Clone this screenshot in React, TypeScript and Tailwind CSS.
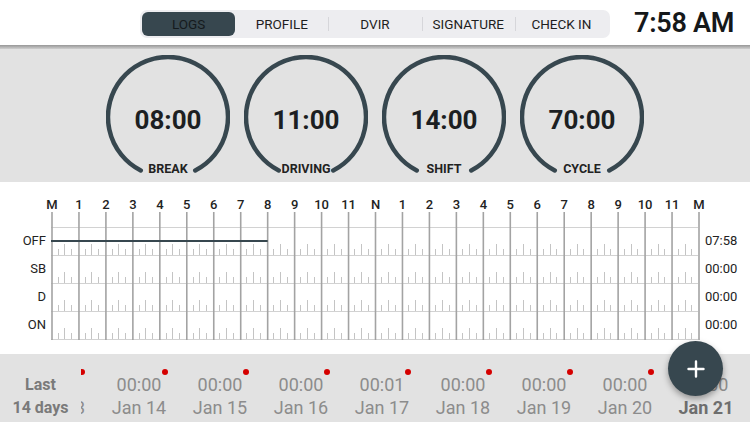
import React from 'react';

const SLATE = '#37474f';

const tabs = ['LOGS', 'PROFILE', 'DVIR', 'SIGNATURE', 'CHECK IN'];

const gauges = [
  { value: '08:00', label: 'BREAK' },
  { value: '11:00', label: 'DRIVING' },
  { value: '14:00', label: 'SHIFT' },
  { value: '70:00', label: 'CYCLE' },
];

const hours = ['M', '1', '2', '3', '4', '5', '6', '7', '8', '9', '10', '11', 'N', '1', '2', '3', '4', '5', '6', '7', '8', '9', '10', '11', 'M'];

const rows = [
  { label: 'OFF', total: '07:58' },
  { label: 'SB', total: '00:00' },
  { label: 'D', total: '00:00' },
  { label: 'ON', total: '00:00' },
];

const days = [
  { time: '', date: 'Jan 13', dot: true },
  { time: '00:00', date: 'Jan 14', dot: true },
  { time: '00:00', date: 'Jan 15', dot: true },
  { time: '00:00', date: 'Jan 16', dot: true },
  { time: '00:01', date: 'Jan 17', dot: true },
  { time: '00:00', date: 'Jan 18', dot: true },
  { time: '00:00', date: 'Jan 19', dot: true },
  { time: '00:00', date: 'Jan 20', dot: true },
  { time: '00:00', date: 'Jan 21', dot: false, today: true },
];

const Gauge: React.FC<{ value: string; label: string }> = ({ value, label }) => {
  // arc with a gap at the bottom, ~27deg either side
  const r = 60;
  const c = 62;
  const dx = r * Math.sin((27 * Math.PI) / 180);
  const dy = r * Math.cos((27 * Math.PI) / 180);
  const d = `M ${c - dx} ${c + dy} A ${r} ${r} 0 1 1 ${c + dx} ${c + dy}`;
  return (
    <div className="relative w-[124px] h-[124px]">
      <svg width="124" height="124" viewBox="0 0 124 124">
        <path d={d} fill="none" stroke={SLATE} strokeWidth="4.5" strokeLinecap="round" />
      </svg>
      <div className="absolute left-0 right-0 top-[50px] text-center text-[26px] leading-[30px] font-bold text-[#1c1f22]">
        {value}
      </div>
      <div className="absolute left-0 right-0 top-[107px] text-center text-[12.5px] leading-[14px] font-bold text-[#222]">
        {label}
      </div>
    </div>
  );
};

// grid drawn with a 10px left margin so the first/last hour labels fit
const PAD = 10;

const LogGrid: React.FC = () => {
  const W = 647;
  const hw = W / 24;
  const top = 45;
  const rowH = 28;
  const lines: React.ReactNode[] = [];

  for (let r = 0; r <= 4; r++) {
    lines.push(
      <line key={`h${r}`} x1={PAD} x2={PAD + W} y1={top + r * rowH + 0.5} y2={top + r * rowH + 0.5} stroke="#d2d2d2" strokeWidth="1" />
    );
  }
  for (let r = 0; r < 4; r++) {
    const yb = top + (r + 1) * rowH;
    for (let h = 0; h < 24; h++) {
      for (let q = 1; q < 4; q++) {
        const x = PAD + Math.round((h + q / 4) * hw) + 0.5;
        const len = q === 2 ? 11 : 6;
        lines.push(<line key={`t${r}-${h}-${q}`} x1={x} x2={x} y1={yb - len} y2={yb} stroke="#c4c4c4" strokeWidth="1" />);
      }
    }
  }
  for (let h = 0; h <= 24; h++) {
    const x = PAD + h * hw + 1;
    lines.push(<line key={`v${h}`} x1={x} x2={x} y1={30} y2={top + 4 * rowH + 1} stroke="#a3a3a3" strokeWidth="1.6" />);
  }

  return (
    <svg width="672" height="172" viewBox="0 0 672 172" className="shrink-0">
      {hours.map((h, i) => (
        <text
          key={i}
          x={PAD + i * hw + 1}
          y={26.5}
          textAnchor="middle"
          fontSize="13"
          fontWeight="500"
          fill="#222"
          fontFamily="Roboto, 'Liberation Sans', sans-serif"
        >
          {h}
        </text>
      ))}
      {lines}
      <line x1={PAD} x2={PAD + 8 * hw + 1} y1={59} y2={59} stroke={SLATE} strokeWidth="2" />
    </svg>
  );
};

export default function App() {
  return (
    <div className="relative w-[750px] h-[422px] overflow-hidden bg-white font-['Roboto','Liberation_Sans',sans-serif]">
      {/* Header */}
      <div className="h-[45px] flex items-center pl-[140px] pr-[16px]">
        <div className="flex w-[470px] h-[28px] mt-[3px] p-[2px] rounded-[7px] bg-[#ededf0]">
          {tabs.map((t, i) => (
            <div key={t} className="relative flex-1 flex items-center justify-center">
              {i > 1 && <div className="absolute left-0 top-[5px] bottom-[5px] w-px bg-[#d6d6da]" />}
              <div
                className={`w-full h-full flex items-center justify-center rounded-[6px] text-[13.5px] ${
                  i === 0 ? 'bg-[#37474f] text-[#151a1d]' : 'text-[#1e1e1e]'
                }`}
              >
                {t}
              </div>
            </div>
          ))}
        </div>
        <div className="ml-auto mt-[2px] text-[27px] font-semibold tracking-[-0.3px] text-[#15181a]">7:58 AM</div>
      </div>
      <div className="h-[4px] bg-gradient-to-b from-[#979797] to-[#cfcfcf]" />

      {/* Gauges */}
      <div className="h-[133px] bg-[#e2e2e2] flex justify-center gap-[14px] pt-[6px]">
        {gauges.map((g) => (
          <Gauge key={g.label} {...g} />
        ))}
      </div>

      {/* Log grid */}
      <div className="h-[172px] bg-white flex">
        <div className="w-[46px] shrink-0 pt-[45px] flex flex-col">
          {rows.map((r) => (
            <div key={r.label} className="h-[28px] flex items-center justify-end text-[13px] text-[#222]">
              {r.label}
            </div>
          ))}
        </div>
        <div className="ml-[-5px]">
          <LogGrid />
        </div>
        <div className="flex-1 pt-[45px] flex flex-col ml-[-8px]">
          {rows.map((r) => (
            <div key={r.label} className="h-[28px] flex items-center text-[13px] text-[#222]">
              {r.total}
            </div>
          ))}
        </div>
      </div>

      {/* Days strip */}
      <div className="h-[68px] bg-[#e2e2e2] flex">
        <div className="relative z-10 w-[81px] shrink-0 flex flex-col items-center pt-[20px] text-[16px] leading-[22px] font-bold text-[#7a7a7a]">
          <span>Last</span>
          <span className="mt-px">14 days</span>
        </div>
        <div className="flex-1 overflow-hidden">
          <div className="flex ml-[-63.5px]">
            {days.map((d) => (
              <div key={d.date} className="w-[81px] shrink-0 flex flex-col items-center pt-[20px]">
                <span className="relative h-[22px] text-[18px] leading-[22px] text-[#8c8c8c]">
                  {d.time || '\u00a0'}
                  {d.dot && d.time && <span className="absolute -right-[7px] -top-[5px] w-[6px] h-[6px] rounded-full bg-[#d50000]" />}
                  {!d.time && d.dot && <span className="absolute left-[23px] -top-[5px] w-[6px] h-[6px] rounded-full bg-[#d50000]" />}
                </span>
                <span
                  className={`mt-px text-[18px] leading-[22px] ${d.today ? 'font-bold text-[#6e6e6e]' : 'text-[#8c8c8c]'}`}
                >
                  {d.date}
                </span>
              </div>
            ))}
          </div>
        </div>
      </div>

      {/* FAB */}
      <div className="absolute left-[668px] top-[341px] w-[55px] h-[55px] rounded-full bg-[#37474f] shadow-[0_3px_6px_rgba(0,0,0,0.35)] flex items-center justify-center">
        <svg width="18" height="18" viewBox="0 0 18 18">
          <path d="M9 1.5v15M1.5 9h15" stroke="#fff" strokeWidth="2.4" strokeLinecap="round" />
        </svg>
      </div>
    </div>
  );
}
